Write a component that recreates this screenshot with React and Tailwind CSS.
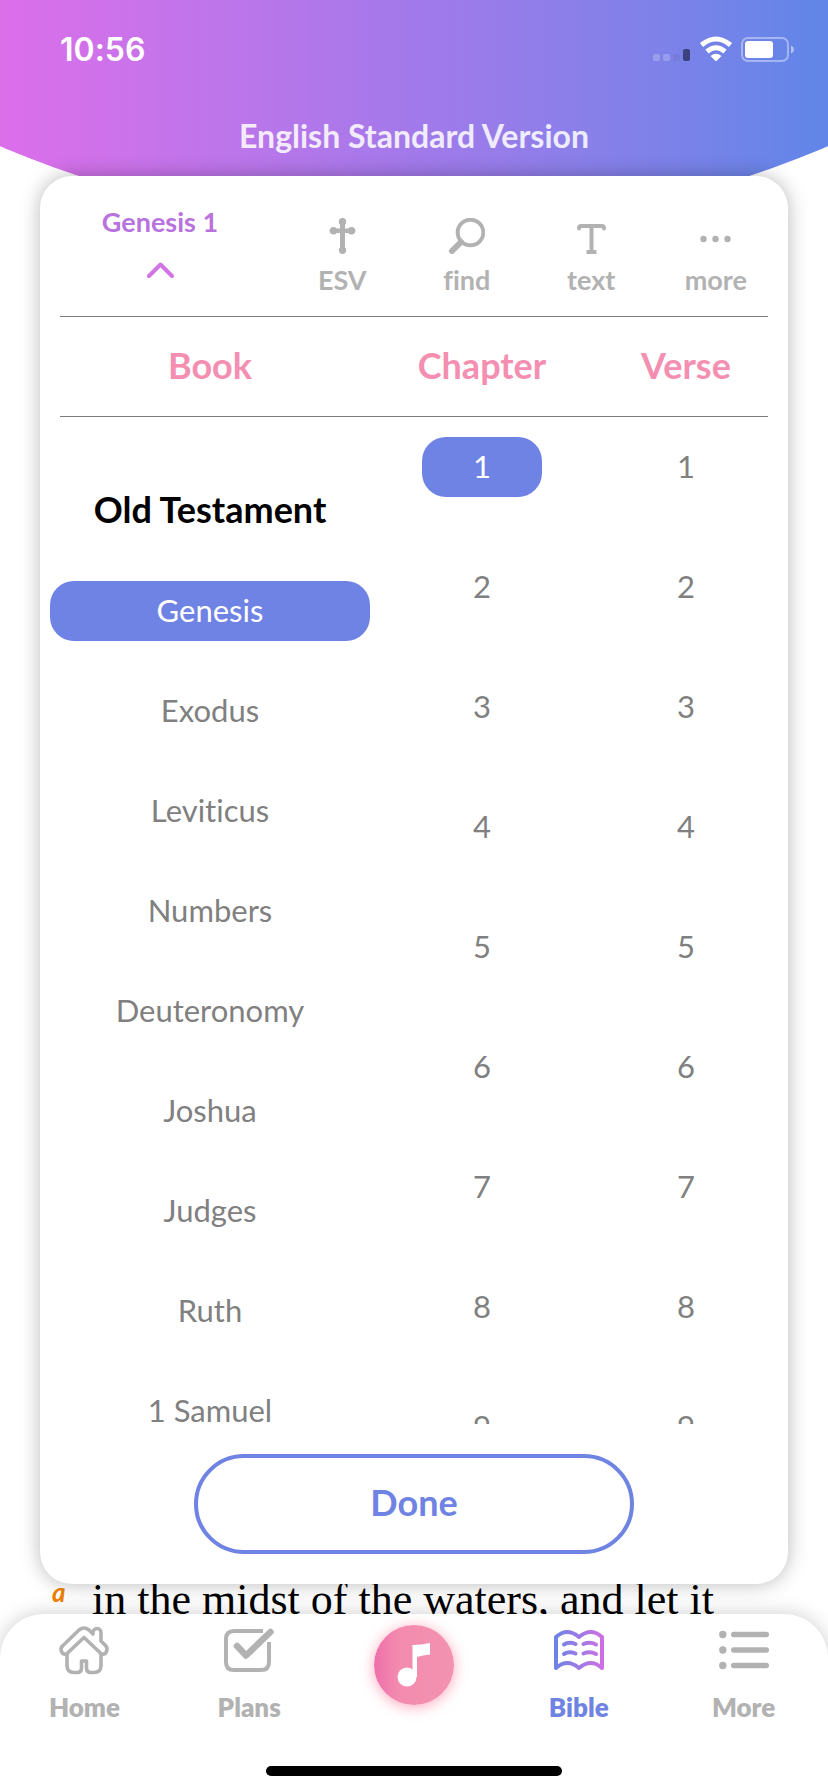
import React, { useState } from "react";

const BOOKS = [
  "Genesis",
  "Exodus",
  "Leviticus",
  "Numbers",
  "Deuteronomy",
  "Joshua",
  "Judges",
  "Ruth",
  "1 Samuel",
];
const NUMBERS = [1, 2, 3, 4, 5, 6, 7, 8, 9];

export default function App() {
  const [book, setBook] = useState("Genesis");
  const [chapter, setChapter] = useState(1);

  return (
    <div className="flex h-screen flex-col overflow-hidden bg-white font-['Lato','Liberation_Sans',sans-serif] [font-variant-ligatures:none]">
      <Header />

      <main className="relative flex min-h-0 flex-1 flex-col">
        <section className="relative z-10 mx-10 flex min-h-0 flex-1 flex-col rounded-[32px] bg-white shadow-[0_0_20px_rgba(0,0,0,0.28)]">
          <Toolbar label={`${book} ${chapter}`} />

          <div className="mx-5 h-px flex-none bg-[#7c7c7c]" />
          <div className="grid h-[99px] flex-none grid-cols-[5fr_3fr_3fr] items-center pb-1 text-center text-[36px] font-bold text-[#f48fb1]">
            <h2>Book</h2>
            <h2>Chapter</h2>
            <h2>Verse</h2>
          </div>
          <div className="mx-5 h-px flex-none bg-[#7c7c7c]" />

          <div className="grid min-h-0 flex-1 grid-cols-[5fr_3fr_3fr] grid-rows-[minmax(0,1fr)] overflow-hidden text-[31px] text-[#808080]">
            <div className="flex flex-col gap-10 overflow-hidden px-2.5 pt-16">
              <h3 className="flex h-[60px] flex-none items-center justify-center pb-1 text-[36px] font-bold text-black">
                Old Testament
              </h3>
              {BOOKS.map((name) => (
                <Option key={name} selected={name === book} onClick={() => setBook(name)}>
                  {name}
                </Option>
              ))}
            </div>
            <div className="flex flex-col gap-[60px] overflow-hidden px-[42px] pt-5">
              {NUMBERS.map((n) => (
                <Option key={n} selected={n === chapter} onClick={() => setChapter(n)}>
                  {n}
                </Option>
              ))}
            </div>
            <div className="flex flex-col gap-[60px] overflow-hidden px-[42px] pt-5">
              {NUMBERS.map((n) => (
                <Option key={n}>{n}</Option>
              ))}
            </div>
          </div>

          <button
            type="button"
            className="mx-auto my-[30px] h-[100px] w-[440px] max-w-full flex-none rounded-full border-4 border-[#6f83e3] pb-1 text-[36px] font-bold text-[#6f83e3]"
          >
            Done
          </button>
        </section>

        <div className="flex h-[30px] flex-none items-end whitespace-nowrap pl-[52px] text-black">
          <span className="w-10 flex-none text-[26px] leading-[44px] font-bold text-[#f08000] italic">a</span>
          <p className="font-['Liberation_Serif',serif] text-[44px] leading-7">
            in the midst of the waters, and let it
          </p>
        </div>
      </main>

      <TabBar />
    </div>
  );
}

function Header() {
  return (
    <header className="-mb-[54px] h-[230px] flex-none bg-linear-to-r from-[#dc6eea] via-[#a279ea] to-[#5f86e8] text-white [clip-path:ellipse(129%_1070px_at_50%_-840px)]">
      <div className="flex h-[100px] items-center justify-between pr-[34px] pl-[60px]">
        <span className="font-['Inter',sans-serif] text-[32px] font-semibold">10:56</span>
        <svg viewBox="0 0 142 28" className="h-7 w-[142px]" aria-hidden="true">
          <rect x="1" y="18" width="7" height="7" rx="2" fill="#fff" opacity=".22" />
          <rect x="11" y="18" width="7" height="7" rx="2" fill="#fff" opacity=".22" />
          <rect x="21" y="18" width="7" height="7" rx="2" fill="#6c74b8" opacity=".35" />
          <rect x="31" y="13" width="7" height="12" rx="2" fill="#3b427d" />
          <g fill="none" stroke="#fff" strokeWidth="5">
            <path d="M49.500 9Q64 -3 78.500 9" />
            <path d="M55 15.500Q64 8 73 15.500" />
          </g>
          <path d="M58.500 20Q64 15.500 69.500 20L65 24.500Q64 25.500 63 24.500Z" fill="#fff" />
          <rect x="90" y="2" width="46" height="23" rx="6" fill="none" stroke="#fff" strokeWidth="2" opacity=".4" />
          <rect x="93" y="5" width="28" height="17" rx="3" fill="#fff" />
          <path d="M139 9.500q3 1.500 3 4t-3 4z" fill="#fff" opacity=".5" />
        </svg>
      </div>
      <h1 className="text-center text-[32px] leading-[72px] font-bold text-white/85">
        English Standard Version
      </h1>
    </header>
  );
}

function Toolbar({ label }) {
  return (
    <div className="grid h-[140px] flex-none grid-cols-[240px_repeat(4,minmax(0,1fr))] pr-2.5 text-[27px] font-bold text-[#b2b2b2]">
      <button type="button" className="flex flex-col items-center gap-6 pt-[30px] leading-8 text-[#b873dc]">
        {label}
        <svg viewBox="0 0 27 16" className="h-4 w-[27px]" aria-hidden="true">
          <path
            d="M2 14L13.500 2.500L25 14"
            fill="none"
            stroke="#d274e6"
            strokeWidth="4"
            strokeLinecap="round"
            strokeLinejoin="round"
          />
        </svg>
      </button>
      <Tool label="ESV">
        <g fill="currentColor">
          <path d="M16 3h5v31h-5zM8 10.500h21v4.500H8z" />
          <circle cx="18.500" cy="3.800" r="3.700" />
          <circle cx="18.500" cy="32.300" r="3.600" />
          <circle cx="9.500" cy="12.700" r="3.700" />
          <circle cx="27.500" cy="12.700" r="3.700" />
          <circle cx="7.500" cy="12.700" r="2" />
          <circle cx="29.500" cy="12.700" r="2" />
        </g>
      </Tool>
      <Tool label="find">
        <g fill="none" stroke="currentColor">
          <circle cx="22.500" cy="14.500" r="12.800" strokeWidth="4" />
          <path d="M13 24L4 33" strokeWidth="6" strokeLinecap="round" />
        </g>
      </Tool>
      <Tool label="text">
        <path
          d="M6 10.500Q6 8 8 8H29Q31 8 31 10.500M18.500 8V34"
          fill="none"
          stroke="currentColor"
          strokeWidth="4"
          strokeLinecap="round"
        />
        <path d="M13.500 32h10v4h-10z" fill="currentColor" />
      </Tool>
      <Tool label="more">
        <g fill="currentColor">
          <circle cx="6.500" cy="21" r="3.200" />
          <circle cx="18.500" cy="21" r="3.200" />
          <circle cx="30.500" cy="21" r="3.200" />
        </g>
      </Tool>
    </div>
  );
}

function Tool({ label, children }) {
  return (
    <button type="button" className="flex flex-col items-center gap-2.5 pt-[42px] leading-8">
      <svg viewBox="0 0 37 36" className="h-9 w-[37px]" aria-hidden="true">
        {children}
      </svg>
      {label}
    </button>
  );
}

function Option({ selected = false, onClick, children }) {
  return (
    <button
      type="button"
      onClick={onClick}
      className={
        selected
          ? "h-[60px] w-full flex-none rounded-3xl bg-[#6f83e5] pb-0.5 text-white"
          : "h-[60px] w-full flex-none rounded-3xl pb-0.5"
      }
    >
      {children}
    </button>
  );
}

function TabBar() {
  return (
    <nav className="relative z-20 flex-none rounded-t-[44px] bg-white shadow-[0_0_20px_rgba(0,0,0,0.2)]">
      <div className="grid h-[152px] grid-cols-5 px-0.5">
        <Tab label="Home">
          <g fill="none" stroke="currentColor" strokeWidth="3.600" strokeLinejoin="round" strokeLinecap="round">
            <path d="M8 28Q4 29 2.500 25.500Q1 22 4 19.500L20 4Q25 0 30 4L34 8V6.500A4 4 0 0 1 42 6.500V15L46.500 19.500Q49 22 47.500 25.500Q46 29 42 28" />
            <path d="M7 28.500L25 11.500L43 28.500" />
            <path d="M8 28V39.500Q8 46.500 15 46.500H18Q22.500 46.500 22.500 42V35H27.500V42Q27.500 46.500 32 46.500H35Q42 46.500 42 39.500V28" />
          </g>
        </Tab>
        <Tab label="Plans">
          <g fill="none" stroke="currentColor" strokeLinecap="butt">
            <path d="M39 5H10Q2 5 2 13V36Q2 44 10 44H37Q45 44 45 36V16" strokeWidth="4" />
            <path d="M13 20L22 29.500L46.500 6" strokeWidth="6.500" strokeLinecap="round" strokeLinejoin="round" />
          </g>
        </Tab>
        <div className="flex justify-center pt-[11px]">
          <button
            type="button"
            aria-label="Play music"
            className="size-20 rounded-full bg-linear-to-r from-[#ed6fab] via-[#f38bae] via-30% to-[#f392b1] shadow-[0_2px_14px_rgba(255,120,155,0.65)]"
          >
            <svg viewBox="0 0 80 80" className="size-20" aria-hidden="true">
              <circle cx="33" cy="52" r="9.500" fill="#fff" />
              <path d="M38.500 20Q47 20 56 18V29.500Q49 30 43 32V52H38.500Z" fill="#fff" />
            </svg>
          </button>
        </div>
        <Tab label="Bible" active>
          <defs>
            <linearGradient id="bookFill" x1="0" y1="0" x2="50" y2="0" gradientUnits="userSpaceOnUse">
              <stop offset="0" stopColor="#6a84e4" />
              <stop offset="1" stopColor="#d06fe4" />
            </linearGradient>
          </defs>
          <g fill="none" stroke="url(#bookFill)" strokeWidth="4" strokeLinecap="round" strokeLinejoin="round">
            <path d="M2 42V11Q13 1 25 11Q37 1 48 11V42Q37 32 25 42Q13 32 2 42Z" />
            <path d="M10 18.500Q15 15.500 21.500 18M10 28Q15 25 21.500 27.500M29.500 18Q36 15.500 42 18.500M29.500 27.500Q36 25 42 28" />
          </g>
        </Tab>
        <Tab label="More">
          <g fill="currentColor">
            <circle cx="3.800" cy="8.500" r="3.700" />
            <circle cx="3.800" cy="24" r="3.700" />
            <circle cx="3.800" cy="39.500" r="3.700" />
            <rect x="12" y="5.700" width="38" height="5.600" rx="2.800" />
            <rect x="12" y="21.200" width="38" height="5.600" rx="2.800" />
            <rect x="12" y="36.700" width="38" height="5.600" rx="2.800" />
          </g>
        </Tab>
      </div>
      <div className="mx-auto mb-4 h-2.5 w-[296px] rounded-full bg-black" />
    </nav>
  );
}

function Tab({ label, active = false, children }) {
  return (
    <a
      href="#"
      className={
        active
          ? "flex flex-col items-center gap-[15px] pt-3 text-[26px] leading-9 font-extrabold text-[#6f83e3]"
          : "flex flex-col items-center gap-[15px] pt-3 text-[26px] leading-9 font-extrabold text-[#b2b2b2]"
      }
    >
      <svg viewBox="0 0 50 48" className="h-12 w-[50px] overflow-visible" aria-hidden="true">
        {children}
      </svg>
      {label}
    </a>
  );
}
